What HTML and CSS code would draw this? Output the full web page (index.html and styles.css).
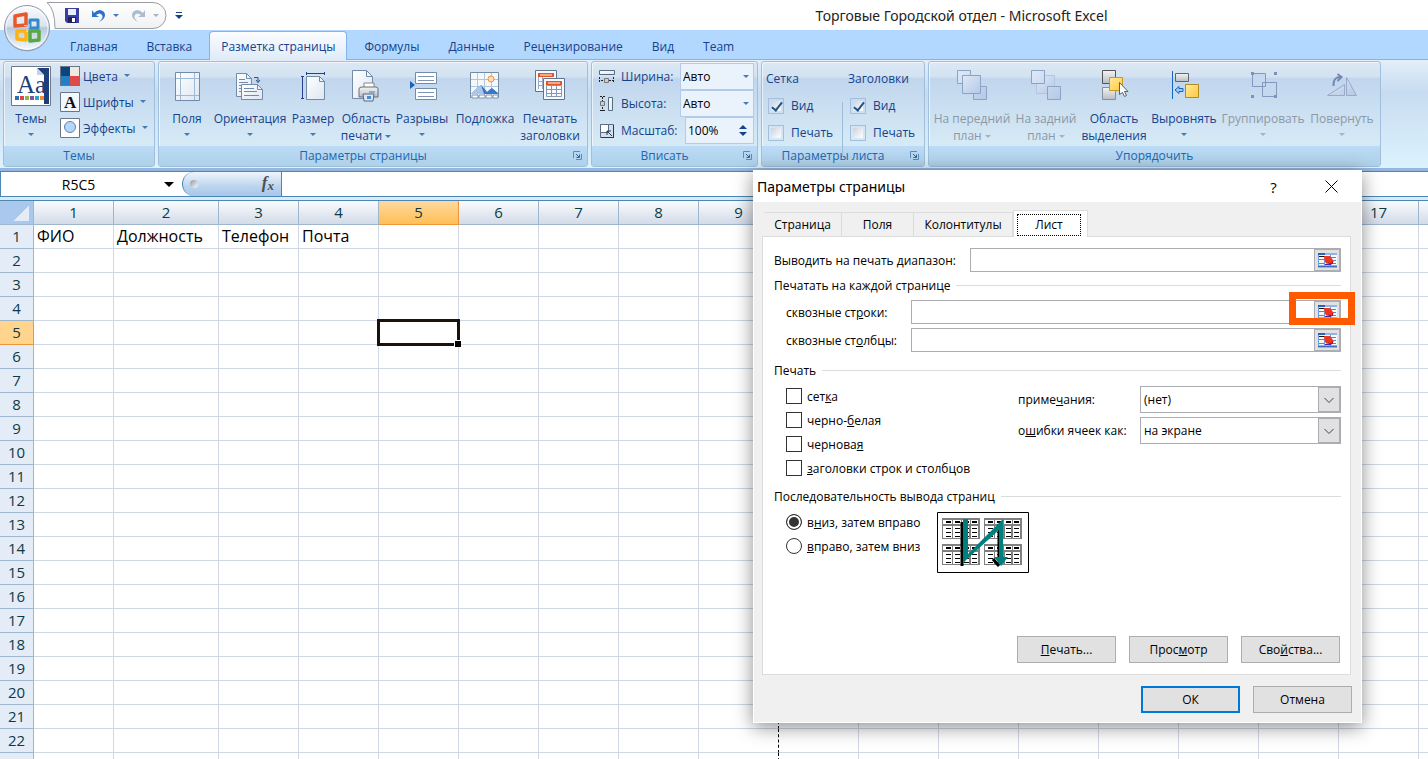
FILE: index.html
```html
<!DOCTYPE html>
<html lang="ru">
<head>
    <meta charset="UTF-8">
    <meta name="viewport" content="width=device-width, initial-scale=1.0">
    <title>Торговые Городской отдел - Microsoft Excel</title>
    <link rel="stylesheet" href="styles.css">
</head>
<body>

    <!-- Shared symbols and gradients -->
    <svg class="defs" width="0" height="0" aria-hidden="true">
        <defs>
            <linearGradient id="paper" x1="0" y1="0" x2="1" y2="1"><stop offset="0" stop-color="#fff"/><stop offset="1" stop-color="#dde6f2"/></linearGradient>
            <linearGradient id="faded" x1="0" y1="0" x2="1" y2="1"><stop offset="0" stop-color="#dfe9f8"/><stop offset="1" stop-color="#b4c8e6"/></linearGradient>
            <linearGradient id="grey" x1="0" y1="0" x2="0" y2="1"><stop offset="0" stop-color="#f4f4f4"/><stop offset="1" stop-color="#b9bcc2"/></linearGradient>
            <linearGradient id="gold" x1="0" y1="0" x2="1" y2="1"><stop offset="0" stop-color="#ffeb9c"/><stop offset="1" stop-color="#ffc83c"/></linearGradient>
            <linearGradient id="orb" x1="0" y1="0" x2="0" y2="1"><stop offset="0" stop-color="#fafbfd"/><stop offset=".45" stop-color="#dde4ee"/><stop offset=".5" stop-color="#b9c9dd"/><stop offset="1" stop-color="#f4f9ff"/></linearGradient>
            <linearGradient id="pill" x1="0" y1="0" x2="0" y2="1"><stop offset="0" stop-color="#fff"/><stop offset="1" stop-color="#f0f1f3"/></linearGradient>
            <symbol id="launcher" viewBox="0 0 9 9"><path d="M.5 7V.5H7" fill="none" stroke="#5d8bb8"/><path d="M3 8.500h5.500V3" fill="none" stroke="#5d8bb8"/><path d="M3 3l3 3M6.500 3.500v3h-3" fill="none" stroke="#2b6396"/></symbol>
            <symbol id="refedit" viewBox="0 0 19 15">
                <path d="M0 0h19v15H0z" fill="#f4f8fd"/>
                <path d="M0 0h7v2H0z" fill="#2c62b8"/><path d="M7 0h12v2H7z" fill="#8db5ea"/>
                <path d="M0 3.500h7" stroke="#111"/>
                <path d="M1 6.500h5M13 4.500h5M14 7.500h4M1 10.500h5M13 10.500h5" stroke="#4f86d0"/>
                <path d="M0 13.500h19" stroke="#3f6fb8" stroke-width="2"/>
                <path d="M.5 2v11M6.500 4v9M12.500 2v11" stroke="#6f9bd8"/>
                <path d="M6 3h6l3 4v3l-2 1-2-1-2 1-2-2z" fill="#f2341c"/><path d="M10 10l4 1 1-3" stroke="#a01010" fill="none"/>
                <path d="M7 11.500h6" stroke="#3a2bbd"/>
            </symbol>
            <symbol id="sheet-tile" viewBox="0 0 38 22">
                <path d="M0 0h38v21H0z" fill="#808080"/>
                <path d="M1 2h9v4H1zM11 2h8v4h-8zM20 2h8v4h-8zM29 2h7v4h-7zM1 8h9v12H1zM11 8h8v12h-8zM21 8h6v12h-6zM29 8h7v12h-7z" fill="#fff"/>
                <path d="M4 4h5M13 4h5M22 4h5M30 4h5" stroke="#000" stroke-width="2"/>
                <path d="M4 10.500h5M4 14.500h5M4 18.500h5M13 10.500h5M13 14.500h5M13 18.500h5M22 10.500h5M22 14.500h5M22 18.500h5M30 10.500h5M30 14.500h5M30 18.500h5" stroke="#000"/>
            </symbol>
        </defs>
    </svg>

    <header class="titlebar">
        <button class="office-button" aria-label="Office">
            <svg width="50" height="52" viewBox="0 0 50 52">
                <circle cx="25" cy="29" r="22.500" fill="#8f9bab" opacity=".6"/>
                <circle cx="25" cy="28" r="22.500" fill="url(#orb)" stroke="#8a99ad"/>
                <circle cx="25" cy="28" r="21" fill="none" stroke="#fff" opacity=".7"/>
                <g fill="none" stroke-linejoin="round">
                    <path d="M13 16l11-2v11l-11 1z" stroke="#e9582a" stroke-width="3.500"/>
                    <path d="M28 20h8v8h-8z" stroke="#3489cb" stroke-width="3"/>
                    <path d="M15 31h9v9l-9-1z" stroke="#fbb417" stroke-width="3.500"/>
                    <path d="M28 31h9v9l-9 1z" stroke="#5aa83f" stroke-width="3.500"/>
                </g>
                <path d="M22 25.500h3M27 24v4M24 31h2" stroke="#fff" opacity=".7"/>
            </svg>
        </button>
        <div class="quick-access">
            <svg class="pill" width="120" height="27"><path d="M0 .5Q8 7 8 26.500h98a13 13 0 0 0 0-26z" fill="url(#pill)" stroke="#999da3"/></svg>
            <button aria-label="Сохранить">
                <svg width="14" height="15" viewBox="0 0 14 15"><path d="M0 0h14v15H2l-2-2z" fill="#3a3fa0"/><path d="M3 1h8v6H3z" fill="#e6efff"/><path d="M3 9h8v6H3z" fill="#20225e"/><path d="M7 10h3v4H7z" fill="#fff"/></svg>
            </button>
            <button aria-label="Отменить">
                <svg width="13" height="14" viewBox="0 0 13 14"><path d="M0 1v7h7L4 6q4-3 6 0t-3 7q6-3 6-7T8 1Q5 1 2 4z" fill="#2b70c9"/></svg>
            </button>
            <span class="arrow"></span>
            <button aria-label="Вернуть">
                <svg width="13" height="14" viewBox="0 0 13 14"><path d="M13 1v7H6l3-2Q5 3 3 6t3 7Q0 10 0 6t5-5q3 0 6 3z" fill="#a9bdd3"/></svg>
            </button>
            <span class="arrow arrow-off"></span>
        </div>
        <button class="customize" aria-label="Настройка панели"><span class="arrow arrow-dark"></span></button>
        <h1>Торговые Городской отдел - Microsoft Excel</h1>
    </header>

    <nav class="tabs">
        <a href="#">Главная</a>
        <a href="#">Вставка</a>
        <a href="#" class="active">Разметка страницы</a>
        <a href="#">Формулы</a>
        <a href="#">Данные</a>
        <a href="#">Рецензирование</a>
        <a href="#">Вид</a>
        <a href="#">Team</a>
    </nav>

    <div class="ribbon">
        <section class="group themes">
            <div class="group-body">
                <button class="big">
                    <svg width="40" height="40" viewBox="0 0 40 40"><path d="M.5.5h39v39H.5z" fill="#fff" stroke="#6f7885"/><path d="M26 2h12v36H26z" fill="#1c3f7c"/><path d="M2 2h24l7 7v29H2z" fill="#fff"/><path d="M26 2v7h7z" fill="#c4d3e6"/>
                        <text x="6" y="27" class="icon-serif">Aa</text>
                        <path d="M4 30h4v4H4z" fill="#2c6fb5"/><path d="M9 30h4v4H9z" fill="#d8474a"/><path d="M14 30h4v4h-4z" fill="#8cba3f"/><path d="M19 30h4v4h-4z" fill="#7b55a5"/><path d="M24 30h4v4h-4z" fill="#27a5cf"/><path d="M29 30h4v4h-4z" fill="#f38a2b"/></svg>
                    <span>Темы</span><i class="arrow"></i>
                </button>
                <div class="small-list">
                    <button class="small"><svg width="20" height="20"><path d="M0 0h20v20H0z" fill="#6a7689"/><path d="M1 1h9v9H1z" fill="#0b457d"/><path d="M10 1h9v9h-9z" fill="#eeece1"/><path d="M1 10h9v9H1z" fill="#1f80c4"/><path d="M10 10h9v9h-9z" fill="#dd4b4b"/></svg>Цвета<i class="arrow"></i></button>
                    <button class="small"><svg width="20" height="20"><path d="M.5.5h19v19H.5z" fill="#f3f8ff" stroke="#6a7689"/><text x="4" y="16" class="icon-letter">A</text></svg>Шрифты<i class="arrow"></i></button>
                    <button class="small"><svg width="20" height="20"><path d="M.5.5h19v19H.5z" fill="#fff" stroke="#6a7689"/><circle cx="10" cy="9" r="5.500" fill="#b5d6fb" stroke="#6080b0"/></svg>Эффекты<i class="arrow"></i></button>
                </div>
            </div>
            <footer><span>Темы</span></footer>
        </section>

        <section class="group page-setup">
            <div class="group-body">
                <button class="big">
                    <svg width="32" height="32"><path d="M4.500 2.500h24v28h-24z" fill="url(#paper)" stroke="#718ba8"/><path d="M9.500 3v27M23.500 3v27M5 8.500h23M5 25.500h23" stroke="#9dbbd6"/></svg>
                    <span>Поля</span><i class="arrow"></i>
                </button>
                <button class="big">
                    <svg width="32" height="32"><path d="M2.500 3.500h10l5 5v18h-15z" fill="url(#paper)" stroke="#718ba8"/><path d="M12.500 3.500v5h5M5 9.500h6M5 12.500h9M5 15.500h4M5 18.500h3M5 21.500h3" fill="none" stroke="#718ba8"/><path d="M7.500 14.500h16l5 5v10h-21z" fill="url(#paper)" stroke="#718ba8"/><path d="M23.500 14.500v5h5M10 18.500h10M10 21.500h13M10 25.500h15" fill="none" stroke="#718ba8"/><path d="M20 7.500h4v5M22 10l2 2.500 2-2.500" fill="none" stroke="#35508a"/></svg>
                    <span>Ориентация</span><i class="arrow"></i>
                </button>
                <button class="big">
                    <svg width="32" height="32"><path d="M9.500 6.500h13l5 5v18h-18z" fill="url(#paper)" stroke="#718ba8"/><path d="M22.500 6.500v5h5" fill="none" stroke="#718ba8"/><path d="M9 3.500h19M9.500 2v3M27.500 2v3M5.500 6v23M4 6.500h3M4 28.500h3" stroke="#27408b"/></svg>
                    <span>Размер</span><i class="arrow"></i>
                </button>
                <button class="big">
                    <svg width="32" height="32"><path d="M2.500.5h14l6 6v22h-20z" fill="url(#paper)" stroke="#718ba8"/><path d="M16.500.5v6h6" fill="none" stroke="#718ba8"/><path d="M14 13h10v8H14z" fill="#fff" stroke="#888"/><path d="M9 19q0-2 3-2h14q2 0 2 2v8H9z" fill="url(#grey)" stroke="#666e78"/><path d="M19 22h6" stroke="#2f86cc"/><path d="M13 24h11l-1 7h-9z" fill="#d7e8fb" stroke="#667"/><path d="M17 26h4v3h-4z" fill="#4b8ccb"/></svg>
                    <span>Область<br>печати <i class="arrow"></i></span>
                </button>
                <button class="big">
                    <svg width="32" height="32"><path d="M9.500 2.500h21v11h-21zM9.500 18.500h21v11h-21z" fill="#fff" stroke="#718ba8"/><path d="M12 6.500h16M12 10.500h16M12 22.500h16M12 26.500h16" stroke="#7d95b5"/><path d="M4 11l5 4-5 4z" fill="#1763bd"/></svg>
                    <span>Разрывы</span><i class="arrow"></i>
                </button>
                <button class="big">
                    <svg width="32" height="32"><path d="M1.500 2.500h28v25h-28z" fill="#f4f8fd" stroke="#718ba8"/><path d="M8.500 3v24M15.500 3v24M22.500 3v24M2 9.500h27M2 16.500h27" stroke="#b5c5d8"/><circle cx="22" cy="9" r="3" fill="#ffe0b8" stroke="#f09040"/><path d="M2 24q7-7 10-9 5 5 6 7 3-3 5-4l6 5v1z" fill="#3978c8"/><path d="M2 24q7-7 10-9l3 9z" fill="#a7c8ec"/><path d="M3 25h6v3H3zM10 25h6v3h-6zM17 25h6v3h-6zM24 25h5v3h-5z" fill="#fff" stroke="#8093ad"/></svg>
                    <span>Подложка</span>
                </button>
                <button class="big">
                    <svg width="32" height="32"><path d="M1.500.5h21v21h-21z" fill="#f7faff" stroke="#5f7590"/><path d="M4 3h16v4H4z" fill="#e65424"/><path d="M6 5h12" stroke="#fff"/><path d="M4.500 7v12M8.500 7v12M4 11.500h6M4 15.500h6" stroke="#9aacc4"/><path d="M9.500 8.500h21v21h-21z" fill="#f7faff" stroke="#5f7590"/><path d="M12 11h16v4H12z" fill="#e65424"/><path d="M14 13h12" stroke="#fff"/><path d="M12.500 15.500h15v11h-15zM17.500 15v11M22.500 15v11M12 19.500h15M12 23.500h15" fill="none" stroke="#8298b5"/></svg>
                    <span>Печатать<br>заголовки</span>
                </button>
            </div>
            <footer><span>Параметры страницы</span><button class="launch" aria-label="Параметры страницы"><svg width="9" height="9"><use href="#launcher"/></svg></button></footer>
        </section>

        <section class="group fit">
            <div class="group-body">
                <div class="fit-row">
                    <svg width="16" height="16"><path d="M.5 1.500h15v4H.5z" fill="url(#paper)" stroke="#5a6c84"/><path d="M.5 8v6M14.500 8v6M2 11.500h3M10 11.500h4" stroke="#222" stroke-dasharray="2 1"/><path d="M5.500 9.500h4v4h-4z" fill="#ccd" stroke="#777"/></svg>
                    <label for="fit-width">Ширина:</label>
                    <span class="pick"><select id="fit-width"><option>Авто</option></select></span>
                </div>
                <div class="fit-row">
                    <svg width="16" height="16"><path d="M9.500 1.500h4v13h-4z" fill="url(#paper)" stroke="#5a6c84"/><path d="M1 .5h6M1 14.500h6M3.500 1v4M3.500 11v4" stroke="#222" stroke-dasharray="2 1"/><path d="M1.500 5.500h4v4h-4z" fill="#ccd" stroke="#777"/></svg>
                    <label for="fit-height">Высота:</label>
                    <span class="pick"><select id="fit-height"><option>Авто</option></select></span>
                </div>
                <div class="fit-row">
                    <svg width="16" height="16"><path d="M1.500 1.500h13v13h-13z" fill="#d6e0ec" stroke="#5a6c84"/><path d="M1.500 1.500h8v8h-8z" fill="#fff" stroke="#5a6c84"/><path d="M14.500 2v13M2 14.500h12" stroke="#263858"/><path d="M8 8l5 5M8 12V8h4" fill="none" stroke="#263858"/></svg>
                    <label for="fit-scale">Масштаб:</label>
                    <span class="spin"><input id="fit-scale" type="text" value="100%"><i class="up"></i><i class="down"></i></span>
                </div>
            </div>
            <footer><span>Вписать</span><button class="launch" aria-label="Вписать"><svg width="9" height="9"><use href="#launcher"/></svg></button></footer>
        </section>

        <section class="group sheet-options">
            <div class="group-body">
                <fieldset>
                    <legend>Сетка</legend>
                    <label><input type="checkbox" checked>Вид</label>
                    <label><input type="checkbox">Печать</label>
                </fieldset>
                <fieldset>
                    <legend>Заголовки</legend>
                    <label><input type="checkbox" checked>Вид</label>
                    <label><input type="checkbox">Печать</label>
                </fieldset>
            </div>
            <footer><span>Параметры листа</span><button class="launch" aria-label="Параметры листа"><svg width="9" height="9"><use href="#launcher"/></svg></button></footer>
        </section>

        <section class="group arrange">
            <div class="group-body">
                <button class="big" disabled>
                    <svg width="32" height="32"><g fill="url(#faded)" stroke="#8ca3c6"><path d="M1.500.5h13v13h-13zM17.500 16.500h13v13h-13z"/><path d="M6.500 5.500h18v18h-18z"/></g></svg>
                    <span>На передний<br>план <i class="arrow arrow-off"></i></span>
                </button>
                <button class="big" disabled>
                    <svg width="32" height="32"><g fill="url(#faded)" stroke="#8ca3c6"><path d="M6.500 5.500h18v18h-18z" stroke="#b3c5df"/><path d="M1.500.5h13v13h-13zM17.500 16.500h13v13h-13z"/></g></svg>
                    <span>На задний<br>план <i class="arrow arrow-off"></i></span>
                </button>
                <button class="big">
                    <svg width="32" height="32"><path d="M4.500.5h13v13h-13z" fill="url(#grey)" stroke="#555"/><path d="M4.500 17.500h13v12h-13z" fill="url(#grey)" stroke="#8a8f98"/><path d="M11.500 7.500h13v13h-13z" fill="url(#gold)" stroke="#c49a2c"/><path d="M21.500 12.500v12l3-2 2 4 2-1-2-4h3.500z" fill="#fff" stroke="#566"/></svg>
                    <span>Область<br>выделения</span>
                </button>
                <button class="big">
                    <svg width="32" height="32"><path d="M4.500 1v28" stroke="#1763bd"/><path d="M7.500 3.500h13v8h-13z" fill="url(#grey)" stroke="#666"/><path d="M17.500 14.500h13v13h-13z" fill="url(#gold)" stroke="#b18a24"/><path d="M7 20l4-3.500v2h4v3h-4v2z" fill="#9cc8f5" stroke="#1763bd"/></svg>
                    <span>Выровнять</span><i class="arrow"></i>
                </button>
                <button class="big" disabled>
                    <svg width="32" height="32"><g fill="#c6d8ef" stroke="#8299bd"><path d="M5.500 3.500h13v13h-13z"/><path d="M15.500 12.500h14v14h-14z"/><path d="M15.500 12.500h3v4h-3z"/></g><path d="M4 2h3v3H4zM27 2h3v3h-3zM4 25h3v3H4zM27 25h3v3h-3z" fill="#7d93b8"/></svg>
                    <span>Группировать</span><i class="arrow arrow-off"></i>
                </button>
                <button class="big" disabled>
                    <svg width="32" height="32"><path d="M1.500 25.500h17v-11zM20.500 25.500V7.500l10 18z" fill="url(#faded)" stroke="#97abc9"/><path d="M7.500 16Q7 7 14 7M11.500 4l4 3-4 4" fill="none" stroke="#7288b0" stroke-width="2"/></svg>
                    <span>Повернуть</span><i class="arrow arrow-off"></i>
                </button>
            </div>
            <footer><span>Упорядочить</span></footer>
        </section>
    </div>

    <div class="formula-bar">
        <input class="name-box" type="text" value="R5C5" aria-label="Имя ячейки">
        <span class="name-arrow"></span>
        <button class="fx" aria-label="Вставить функцию"><span class="knob"></span><em>f<sub>x</sub></em></button>
        <input class="formula" type="text" aria-label="Строка формул">
    </div>

    <main class="sheet">
        <table id="grid">
            <thead></thead>
            <tbody></tbody>
        </table>
    </main>

    <div class="dialog" role="dialog" aria-labelledby="dialog-title">
        <div class="dialog-title">
            <h2 id="dialog-title">Параметры страницы</h2>
            <button aria-label="Справка">?</button>
            <button aria-label="Закрыть"><svg width="13" height="13"><path d="M.5.5l12 12M12.500.5l-12 12" stroke="#000"/></svg></button>
        </div>
        <div class="dialog-tabs">
            <button>Страница</button>
            <button>Поля</button>
            <button>Колонтитулы</button>
            <button class="active"><span>Лист</span></button>
        </div>
        <div class="panel">
            <div class="field">
                <label for="print-area">Выводить на печать <u>д</u>иапазон:</label>
                <span class="ref"><input id="print-area" type="text"><button aria-label="Свернуть"><svg width="19" height="15"><use href="#refedit"/></svg></button></span>
            </div>
            <h3>Печатать на каждой странице</h3>
            <div class="titles">
                <label for="rows">сквозные ст<u>р</u>оки:</label>
                <span class="ref"><input id="rows" type="text"><button aria-label="Свернуть"><svg width="19" height="15"><use href="#refedit"/></svg></button><b class="highlight"></b></span>
                <label for="cols">сквозные ст<u>о</u>лбцы:</label>
                <span class="ref"><input id="cols" type="text"><button aria-label="Свернуть"><svg width="19" height="15"><use href="#refedit"/></svg></button></span>
            </div>
            <h3>Печать</h3>
            <div class="print">
                <div class="checks">
                    <label><input type="checkbox"><span>сет<u>к</u>а</span></label>
                    <label><input type="checkbox"><span>черно-<u>б</u>елая</span></label>
                    <label><input type="checkbox"><span>чернова<u>я</u></span></label>
                    <label><input type="checkbox"><span><u>з</u>аголовки строк и столбцов</span></label>
                </div>
                <div class="lists">
                    <label for="notes">приме<u>ч</u>ания:</label>
                    <span class="drop"><select id="notes"><option>(нет)</option></select><svg width="22" height="25"><path d="M5.500 10l4.500 4.500L14.500 10" fill="none" stroke="#444"/></svg></span>
                    <label for="errors">о<u>ш</u>ибки ячеек как:</label>
                    <span class="drop"><select id="errors"><option>на экране</option></select><svg width="22" height="25"><path d="M5.500 10l4.500 4.500L14.500 10" fill="none" stroke="#444"/></svg></span>
                </div>
            </div>
            <h3>Последовательность вывода страниц</h3>
            <div class="order">
                <div class="checks">
                    <label><input type="radio" name="order" checked><span>в<u>н</u>из, затем вправо</span></label>
                    <label><input type="radio" name="order"><span><u>в</u>право, затем вниз</span></label>
                </div>
                <svg width="92" height="61" viewBox="0 0 92 61">
                    <path d="M.5.5h91v60H.5z" fill="#fff" stroke="#000"/>
                    <use href="#sheet-tile" x="5" y="6" width="38" height="22"/><use href="#sheet-tile" x="47" y="6" width="38" height="22"/>
                    <use href="#sheet-tile" x="5" y="32" width="38" height="22"/><use href="#sheet-tile" x="47" y="32" width="38" height="22"/>
                    <path d="M25 10v44M62 12v36M56 47l6 7" stroke="#000" stroke-width="3" fill="none"/>
                    <path d="M26 7h5v35L62 11l4-4v38h5l-7 9-7-9h5V18L29 48l-3 4z" fill="#007f7f"/>
                </svg>
            </div>
            <div class="panel-buttons">
                <button class="push"><u>П</u>ечать...</button>
                <button class="push">Прос<u>м</u>отр</button>
                <button class="push">Сво<u>й</u>ства...</button>
            </div>
        </div>
        <div class="dialog-buttons">
            <button class="push default">ОК</button>
            <button class="push">Отмена</button>
        </div>
    </div>

    <script>
        const COLS = 18;
        const ROWS = 23;
        const ACTIVE = { row: 5, col: 5 };
        const PAGE_BREAK = 9;
        const values = ['ФИО', 'Должность', 'Телефон', 'Почта'];

        // Column numbers
        const head = document.createElement('tr');
        head.innerHTML = '<th class="corner"></th>';
        for (let c = 1; c <= COLS; c++) {
            const th = document.createElement('th');
            th.textContent = c;
            if (c === 2) th.className = 'wide';
            if (c === ACTIVE.col) th.className = 'selected';
            head.appendChild(th);
        }
        document.querySelector('#grid thead').appendChild(head);

        // Rows with their numbers
        const body = document.querySelector('#grid tbody');
        for (let r = 1; r <= ROWS; r++) {
            const tr = document.createElement('tr');
            const th = document.createElement('th');
            th.textContent = r;
            if (r === ACTIVE.row) th.className = 'selected';
            tr.appendChild(th);
            for (let c = 1; c <= COLS; c++) {
                const td = document.createElement('td');
                if (r === 1 && values[c - 1]) td.textContent = values[c - 1];
                if (c === PAGE_BREAK) td.className = 'page-break';
                if (r === ACTIVE.row && c === ACTIVE.col) td.className = 'cursor';
                tr.appendChild(td);
            }
            body.appendChild(tr);
        }
    </script>
</body>
</html>
```
FILE: styles.css
```css
* {
    box-sizing: border-box;
}
html, body {
    margin: 0;
    height: 100%;
}
body {
    display: flex;
    flex-direction: column;
    overflow: hidden;
    position: relative;
    background: #fff;
    font-family: "Open Sans", "Noto Sans", sans-serif;
    font-size: 12px;
    color: #15428b;
}
button, input, select {
    font: inherit;
    color: inherit;
    margin: 0;
    padding: 0;
    border: 0;
    background: none;
    border-radius: 0;
    outline: none;
}
button {
    white-space: nowrap;
}
svg {
    display: block;
    flex: none;
}
.defs {
    position: absolute;
}

/* Small drop-down triangle */
.arrow {
    display: inline-block;
    border: 3px solid transparent;
    border-top-color: #3f7cb8;
    border-bottom: 0;
    vertical-align: middle;
}
.arrow-off {
    border-top-color: #a9b2bd;
}
.arrow-dark {
    border-top-color: #15428b;
}

/* Title bar */
.titlebar {
    display: flex;
    flex: none;
    height: 30px;
}
.office-button {
    position: relative;
    z-index: 2;
    width: 50px;
    height: 52px;
    margin-left: 2px;
}
.quick-access {
    display: flex;
    align-items: center;
    gap: 13px;
    position: relative;
    width: 120px;
    height: 27px;
    margin: 2px 0 0 -5px;
    padding-left: 18px;
}
.quick-access .pill {
    position: absolute;
    left: 0;
    top: 0;
}
.quick-access button, .quick-access .arrow {
    position: relative;
}
.quick-access .arrow {
    margin-left: -5px;
}
.customize {
    width: 24px;
    padding-top: 2px;
}
.customize .arrow {
    border-width: 4px 4px 0;
}
.customize .arrow::before {
    content: "";
    position: absolute;
    width: 6px;
    height: 1px;
    margin: -7px 0 0 -3px;
    background: #15428b;
}
.titlebar h1 {
    flex: 1;
    margin: 0;
    padding-left: 304px;
    font-family: "Noto Sans", sans-serif;
    font-size: 14px;
    font-weight: 400;
    line-height: 32px;
    text-align: center;
    color: #222;
}

/* Ribbon tabs */
.tabs {
    display: flex;
    flex: none;
    gap: 1px;
    height: 29px;
    padding-left: 56px;
    background: #b3d8ff;
}
.tabs a {
    padding: 0 14px;
    line-height: 33px;
    color: #15428b;
    text-decoration: none;
}
.tabs .active {
    height: 29px;
    margin: 1px 2px 0;
    padding: 0 11px;
    line-height: 30px;
    border: 1px solid #83b3ea;
    border-bottom: 0;
    border-radius: 4px 4px 0 0;
    background: linear-gradient(#fbfdff, #dfebf8);
    z-index: 1;
}

/* Ribbon */
.ribbon {
    display: flex;
    flex: none;
    gap: 3px;
    height: 112px;
    padding: 1px 3px 2px;
    border-top: 1px solid #83b3ea;
    border-bottom: 3px solid #93b7de;
    background: linear-gradient(#e3eef9, #cfe2f4 20%, #c8dcf1 30%, #dcf2fd);
}
.group {
    display: flex;
    flex-direction: column;
    flex: none;
    height: 106px;
    border: 1px solid #a0bfdc;
    border-radius: 3px;
    box-shadow: inset 1px 1px 0 rgba(255, 255, 255, .6);
    background: linear-gradient(#dce8f4, #d3e2f1 14%, #c1d6ed 16%, #d6eaf6 80%);
}
.group-body {
    display: flex;
    flex: 1;
}
.group footer {
    display: flex;
    height: 20px;
    line-height: 20px;
    background: linear-gradient(#bcdbf6, #aed1e9);
    color: #1c68ad;
}
.group footer span {
    flex: 1;
    text-align: center;
}
.launch {
    width: 20px;
    padding: 0 0 2px 6px;
}
.themes {
    width: 152px;
}
.page-setup {
    width: 430px;
}
.fit {
    width: 167px;
}
.sheet-options {
    width: 164px;
}
.arrange {
    width: 453px;
}
.page-setup .group-body, .arrange .group-body {
    display: grid;
    grid-template-columns: 56px 70px 56px 50px 62px 64px 66px;
}
.arrange .group-body {
    grid-template-columns: 86px 62px 74px 66px 92px 66px;
}
.big {
    display: flex;
    flex-direction: column;
    align-items: center;
    padding-top: 8px;
    line-height: 17px;
}
.big > span {
    margin-top: 8px;
}
.big > .arrow {
    margin-top: 6px;
}
.big:disabled {
    color: #8d98a5;
}
.themes .big {
    width: 54px;
    padding-top: 4px;
}
.themes .big > span {
    margin-top: 4px;
}
.small-list {
    display: flex;
    flex-direction: column;
    padding: 1px 0 0 2px;
}
.small {
    display: flex;
    align-items: center;
    gap: 3px;
    height: 26px;
}
.small .arrow {
    margin: -1px 0 0 3px;
}
.icon-serif {
    font: 25px "Liberation Serif", serif;
    fill: #1f3f78;
}
.icon-letter {
    font: bold 17px "Liberation Serif", serif;
    fill: #111;
}

/* Scale to fit */
.fit .group-body {
    flex-direction: column;
    padding: 1px 3px 0 7px;
}
.fit-row {
    display: flex;
    align-items: center;
    gap: 6px;
    height: 27px;
}
.fit-row label {
    flex: 1;
    white-space: nowrap;
}
.pick, .spin {
    position: relative;
    width: 74px;
    height: 27px;
    border: 1px solid #b1cbe8;
    background: #eaf3fc;
    color: #000;
}
.spin {
    width: 69px;
}
.pick select, .spin input {
    width: 100%;
    height: 24px;
    padding-left: 2px;
    appearance: none;
}
.pick::after, .spin i {
    content: "";
    position: absolute;
    right: 4px;
    top: 11px;
    border: 3px solid transparent;
    border-top-color: #3f7cb8;
    border-bottom: 0;
}
.spin i {
    right: 6px;
    top: 14px;
    border-width: 4px 4px 0;
    border-top-color: #15428b;
}
.spin .up {
    top: 7px;
    transform: rotate(180deg);
}

/* Sheet options */
fieldset {
    min-width: 0;
    margin: 0;
    padding: 0;
    border: 0;
}
.sheet-options .group-body {
    padding: 4px 0 0 4px;
}
.sheet-options fieldset {
    flex: none;
    width: 82px;
}
.sheet-options fieldset + fieldset {
    position: relative;
    width: 76px;
}
.sheet-options fieldset + fieldset::before {
    content: "";
    position: absolute;
    left: -6px;
    top: 10px;
    height: 55px;
    border-left: 1px solid #9dbcd9;
}
.sheet-options legend {
    padding: 0;
    height: 26px;
    line-height: 26px;
}
.sheet-options label {
    display: flex;
    align-items: center;
    gap: 7px;
    height: 27px;
}
.sheet-options input {
    width: 16px;
    height: 16px;
    margin-left: 2px;
    border: 1px solid #a3bfdd;
    background: linear-gradient(135deg, #cdd3dc, #fff) content-box #f4f8fc;
    padding: 2px;
    appearance: none;
    position: relative;
}
.sheet-options input:checked::after {
    content: "";
    position: absolute;
    left: 5px;
    top: 1px;
    width: 4px;
    height: 9px;
    border: solid #1f5487;
    border-width: 0 2px 2px 0;
    transform: rotate(38deg);
}

/* Formula bar */
.formula-bar {
    display: flex;
    flex: none;
    height: 26px;
    border: 1px solid #4b87b5;
    border-right: 0;
    background: #fff;
    color: #000;
}
.name-box {
    width: 155px;
    font-size: 14px;
    text-align: center;
}
.name-arrow {
    align-self: center;
    margin: 0 8px;
    border: 5px solid transparent;
    border-top-color: #000;
    border-bottom: 0;
}
.fx {
    display: flex;
    align-items: center;
    justify-content: space-between;
    width: 100px;
    padding: 0 7px;
    border: 1px solid #4b87b5;
    border-width: 0 1px;
    border-radius: 12px 0 0 12px;
    background: linear-gradient(#eff5fc, #bcd4ee 60%, #a6c7ea);
}
.knob {
    width: 8px;
    height: 8px;
    border-radius: 50%;
    background: linear-gradient(135deg, #8d97a3, #fff);
}
.fx em {
    font: italic bold 17px/20px "Liberation Serif", serif;
    color: #4c5157;
}
.fx sub {
    font-size: 13px;
    vertical-align: -2px;
}
.formula {
    flex: 1;
    min-width: 0;
}

/* Worksheet */
.sheet {
    flex: 1;
    min-height: 0;
    margin-top: 3px;
    overflow: hidden;
    border-top: 1px solid #4b87b5;
    box-shadow: 0 -3px 0 #dceaf7;
}
#grid {
    width: max-content;
    table-layout: fixed;
    border-collapse: separate;
    border-spacing: 0;
    font-size: 15px;
    color: #000;
}
#grid th, #grid td {
    width: 80px;
    min-width: 80px;
    height: 24px;
    padding: 0 0 1px 3px;
    border: solid #d0d7e5;
    border-width: 0 1px 1px 0;
    line-height: 22px;
    white-space: nowrap;
}
#grid td {
    font-size: 16px;
}
#grid th {
    padding: 0 0 1px;
    border-color: #9eb6ce;
    font-weight: 400;
    color: #0d3b44;
    background: #e4ecf7;
}
#grid th:first-child {
    width: 34px;
    min-width: 34px;
}
#grid thead th {
    background: linear-gradient(#f9fcfd, #d3dbe9);
}
#grid .wide {
    width: 105px;
    min-width: 105px;
}
#grid th.selected {
    border-color: #f29536;
    background: #ffd58d;
}
#grid thead th.selected {
    background: linear-gradient(#fdd99e, #ffbf56);
}
#grid thead .corner {
    background: linear-gradient(to bottom right, transparent 50%, #e3ecf7 50%) 14px 5px / 15px 15px no-repeat #a9c8ee;
}
#grid .page-break {
    border-right: 1px dashed #000;
}
.cursor {
    position: relative;
}
.cursor::before {
    content: "";
    position: absolute;
    inset: -2px;
    border: 3px solid #1a120c;
}
.cursor::after {
    content: "";
    position: absolute;
    right: -3px;
    bottom: -3px;
    width: 6px;
    height: 6px;
    border: solid #fff;
    border-width: 1px 0 0 1px;
    background: #000;
}

/* Page setup dialog */
.dialog {
    position: absolute;
    left: 753px;
    top: 170px;
    width: 609px;
    border: 1px solid #fff;
    background: #f0f0f0;
    box-shadow: 0 4px 18px rgba(0, 0, 0, .45);
    color: #000;
    z-index: 3;
}
.dialog-title {
    display: flex;
    align-items: center;
    height: 31px;
    padding-left: 3px;
    background: #fff;
}
.dialog-title h2 {
    flex: 1;
    margin: 0;
    font-family: "Noto Sans", sans-serif;
    font-size: 14px;
    font-weight: 400;
    line-height: 32px;
}
.dialog-title button {
    display: grid;
    place-items: center;
    width: 57px;
    font-size: 15px;
}
.dialog-title button:last-child {
    width: 59px;
}
.dialog-tabs {
    display: flex;
    align-items: flex-end;
    padding: 8px 10px 0;
}
.dialog-tabs button {
    height: 24px;
    width: 72px;
    border: 1px solid #dcdcdc;
    border-width: 1px 1px 0 0;
}
.dialog-tabs button:first-child {
    width: 78px;
}
.dialog-tabs button:nth-child(3) {
    width: 99px;
}
.dialog-tabs .active {
    width: 75px;
    height: 27px;
    margin-bottom: -1px;
    padding: 3px 6px 2px 3px;
    border-left-width: 1px;
    background: #fff;
    z-index: 1;
}
.dialog-tabs .active span {
    display: block;
    line-height: 20px;
    border: 1px dotted #000;
}
.panel {
    margin: 0 10px 0 8px;
    padding: 11px 9px 11px 11px;
    border: 1px solid #dcdcdc;
    background: #fff;
}
.field {
    display: flex;
    align-items: center;
}
.field .ref {
    flex: 1;
    max-width: 371px;
    margin-left: auto;
}
.ref {
    display: flex;
    position: relative;
    height: 24px;
    border: 1px solid #abadb3;
}
.ref input {
    flex: 1;
    min-width: 0;
}
.ref button {
    display: grid;
    place-items: center;
    width: 26px;
    border: 1px solid #abadb3;
    background: #e1e1e1;
}
.highlight {
    position: absolute;
    right: -15px;
    top: -9px;
    width: 66px;
    height: 33px;
    border: 7px solid #ff5a00;
}
.panel h3 {
    display: flex;
    align-items: center;
    gap: 6px;
    height: 26px;
    margin: 0;
    font-size: 12px;
    font-weight: 400;
}
.panel h3::after {
    content: "";
    flex: 1;
    border-top: 1px solid #dcdcdc;
}
.titles {
    display: grid;
    grid-template-columns: 125px 1fr;
    align-items: center;
    gap: 4px 0;
    padding: 2px 0 5px 12px;
}
.print {
    display: flex;
    justify-content: space-between;
    padding: 1px 0 0 12px;
}
.checks label {
    display: flex;
    align-items: center;
    gap: 5px;
    height: 24px;
}
.checks input {
    width: 16px;
    height: 16px;
    border: 1px solid #333;
    appearance: none;
}
.checks input[type="radio"] {
    border-radius: 50%;
}
.checks input[type="radio"]:checked {
    background: #333;
    box-shadow: inset 0 0 0 2px #fff;
}
.lists {
    display: grid;
    grid-template-columns: 122px 201px;
    align-content: start;
    align-items: center;
    gap: 4px 0;
    padding-top: 2px;
}
.drop {
    display: flex;
    position: relative;
    height: 27px;
    border: 1px solid #abadb3;
}
.drop select {
    flex: 1;
    padding-left: 3px;
    appearance: none;
}
.drop svg {
    position: absolute;
    right: 0;
    border: 1px solid #abadb3;
    background: #e1e1e1;
    pointer-events: none;
}
.print + h3 {
    margin-top: 3px;
}
.order {
    display: flex;
    gap: 15px;
    padding: 1px 0 63px 12px;
}
.order svg {
    margin: 2px 0 0 2px;
}
.panel-buttons, .dialog-buttons {
    display: flex;
    justify-content: flex-end;
    gap: 13px;
}
.panel-buttons {
    padding-right: 1px;
}
.dialog-buttons {
    padding: 11px 9px 9px;
}
.push {
    width: 99px;
    height: 27px;
    border: 1px solid #adadad;
    background: #e1e1e1;
}
.default {
    border: 2px solid #0078d7;
}
```
